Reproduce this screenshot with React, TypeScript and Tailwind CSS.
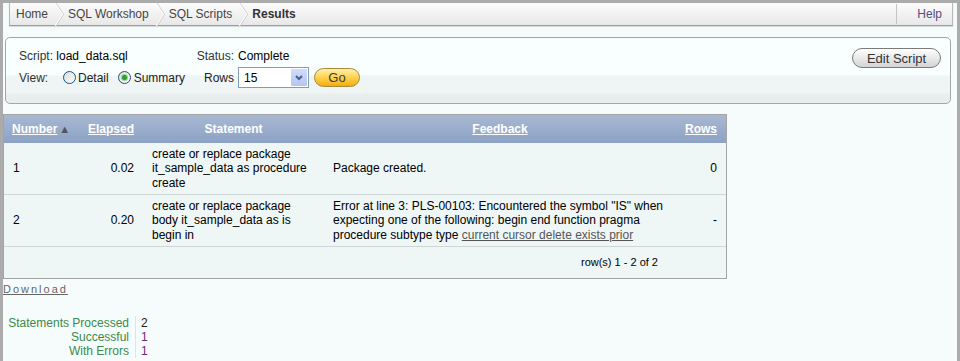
import React from 'react';

const Chevron = () => (
  <svg width="9" height="23" viewBox="0 0 9 23" className="shrink-0 ml-[7px] mr-[4px]">
    <polyline points="1,0 8.5,11.5 1,23" fill="none" stroke="#c9c9c9" strokeWidth="1" />
    <polyline points="0,0 7.5,11.5 0,23" fill="none" stroke="#ffffff" strokeWidth="1" />
  </svg>
);

const Radio = ({ checked }: { checked?: boolean }) => (
  <span className="inline-flex w-[13px] h-[13px] rounded-full border border-[#1c5180] bg-gradient-to-br from-[#dcdcd7] to-[#ffffff] items-center justify-center shrink-0">
    {checked && <span className="w-[5px] h-[5px] rounded-full bg-[#2ea02e] ring-1 ring-[#9ad39a]" />}
  </span>
);

export default function App() {
  return (
    <div className="w-[960px] h-[361px] overflow-hidden bg-[#f6fcfc] border-l-[3px] border-t-[3px] border-r-[3px] border-[#ababab] font-['Liberation_Sans',Arial,sans-serif] text-[12px] text-black">
      {/* Breadcrumb bar */}
      <div className="ml-[6px] mr-[4px] h-[23px] flex items-center bg-gradient-to-b from-[#fcfcfc] to-[#e8e8e8] border-l border-r border-b border-[#b8b8b8] border-b-[#9c9c9c] shadow-[0_1px_1px_rgba(0,0,0,0.12)] text-[#444]">
        <div className="flex items-center pl-[6px] h-full">
          <span>Home</span>
          <Chevron />
          <span>SQL Workshop</span>
          <Chevron />
          <span>SQL Scripts</span>
          <Chevron />
          <span className="font-bold text-[#333]">Results</span>
        </div>
        <div className="ml-auto h-full flex items-center">
          <div className="w-px h-[20px] bg-[#c4c4c4]" />
          <span className="pl-[20px] pr-[10px] text-[#554d7a]">Help</span>
        </div>
      </div>

      {/* Region */}
      <div className="mt-[11px] ml-[2px] w-[946px] h-[67px] rounded-[5px] border border-[#a6a6a6] bg-[linear-gradient(to_bottom,#f9fefe_0px,#f9fefe_37px,#eff5f5_38px,#eff5f5_55px,#e9eded_56px,#e9eded_100%)] flex justify-between">
        <div className="pl-[13px] pt-[11px]">
          <div className="flex h-[14px] items-center">
            <div className="w-[177px]">
              <span className="text-[#333]">Script:</span> <span>load_data.sql</span>
            </div>
            <div className="flex">
              <span className="w-[38px] text-right text-[#333]">Status:</span>
              <span className="pl-[4px]">Complete</span>
            </div>
          </div>
          <div className="flex h-[21px] items-center mt-[4px]">
            <div className="w-[177px] flex items-center">
              <span className="text-[#333] w-[44px]">View:</span>
              <Radio />
              <span className="pl-[2px] text-[#222]">Detail</span>
              <span className="w-[9px]" />
              <Radio checked />
              <span className="pl-[3px] text-[#222]">Summary</span>
            </div>
            <div className="flex items-center">
              <span className="w-[38px] text-right text-[#222]">Rows</span>
              <div className="ml-[4px] w-[71px] h-[21px] border border-[#7f9db9] bg-white flex items-center">
                <span className="pl-[5px] flex-1">15</span>
                <span className="w-[16px] h-[17px] mr-[1px] rounded-[1px] bg-gradient-to-b from-[#d0dcfa] to-[#b4c6f4] flex items-center justify-center">
                  <svg width="8" height="6" viewBox="0 0 8 6">
                    <polyline points="1,1 4,4 7,1" fill="none" stroke="#4d6185" strokeWidth="2" />
                  </svg>
                </span>
              </div>
              <button className="ml-[5px] w-[46px] h-[19px] rounded-full border border-[#a88a3a] bg-gradient-to-b from-[#fff1a8] via-[#ffd24a] to-[#f4ad00] text-[13px] text-[#3a3a3a] leading-none">
                Go
              </button>
            </div>
          </div>
        </div>
        <button className="mt-[10px] mr-[9px] w-[89px] h-[20px] rounded-full border border-[#7a7a7a] bg-gradient-to-b from-[#ffffff] to-[#d4d4d4] text-[13px] text-[#333] leading-none">
          Edit Script
        </button>
      </div>

      {/* Results table */}
      <div className="mt-[10px] w-[724px] border border-[#a4a4a4]">
        <div className="h-[28px] grid grid-cols-[71px_67px_183px_350px_51px] items-center bg-gradient-to-b from-[#a8b8d2] to-[#8ca2c5] text-white font-bold">
          <span className="pl-[8px] flex items-center">
            <span className="underline">Number</span>
            <span className="text-[#555] text-[11px] pl-[2px] leading-none">▲</span>
          </span>
          <span className="pr-[8px] text-right underline">Elapsed</span>
          <span className="text-center">Statement</span>
          <span className="text-center underline">Feedback</span>
          <span className="pr-[9px] text-right underline">Rows</span>
        </div>
        <div className="h-[52px] grid grid-cols-[71px_67px_183px_350px_51px] items-center bg-[#eff6f6] border-b border-[#cfd6d6] leading-[14.5px]">
          <span className="pl-[9px]">1</span>
          <span className="pr-[8px] text-right">0.02</span>
          <span className="pl-[10px] whitespace-nowrap">
            create or replace package<br />it_sample_data as procedure<br />create
          </span>
          <span className="pl-[8px]">Package created.</span>
          <span className="pr-[9px] text-right">0</span>
        </div>
        <div className="h-[52px] grid grid-cols-[71px_67px_183px_350px_51px] items-center bg-[#eff6f6] border-b border-[#cfd6d6] leading-[14.5px]">
          <span className="pl-[9px]">2</span>
          <span className="pr-[8px] text-right">0.20</span>
          <span className="pl-[10px] whitespace-nowrap">
            create or replace package<br />body it_sample_data as is<br />begin in
          </span>
          <span className="pl-[8px] whitespace-nowrap">
            Error at line 3: PLS-00103: Encountered the symbol "IS" when<br />
            expecting one of the following: begin end function pragma<br />
            procedure subtype type <span className="underline text-[#555]">current cursor delete exists prior</span>
          </span>
          <span className="pr-[9px] text-right">-</span>
        </div>
        <div className="h-[31px] flex items-center justify-end pr-[68px] bg-[#eff6f6] text-[11px]">
          row(s) 1 - 2 of 2
        </div>
      </div>

      {/* Download */}
      <div className="mt-[3px] h-[14px] leading-[14px] text-[11px] tracking-[2px] text-[#666] underline">
        Download
      </div>

      {/* Stats */}
      <div className="mt-[20px] grid grid-cols-[133px_auto] w-max leading-[14px]">
        <span className="text-right pr-[6px] border-r border-[#dfe5e5] text-[#3a8a4a]">Statements Processed</span>
        <span className="pl-[5px] text-[#222]">2</span>
        <span className="text-right pr-[6px] border-r border-[#dfe5e5] text-[#3a8a4a]">Successful</span>
        <span className="pl-[5px] text-[#6e2a6e]">1</span>
        <span className="text-right pr-[6px] border-r border-[#dfe5e5] text-[#3a8a4a]">With Errors</span>
        <span className="pl-[5px] text-[#6e2a6e]">1</span>
      </div>
    </div>
  );
}
